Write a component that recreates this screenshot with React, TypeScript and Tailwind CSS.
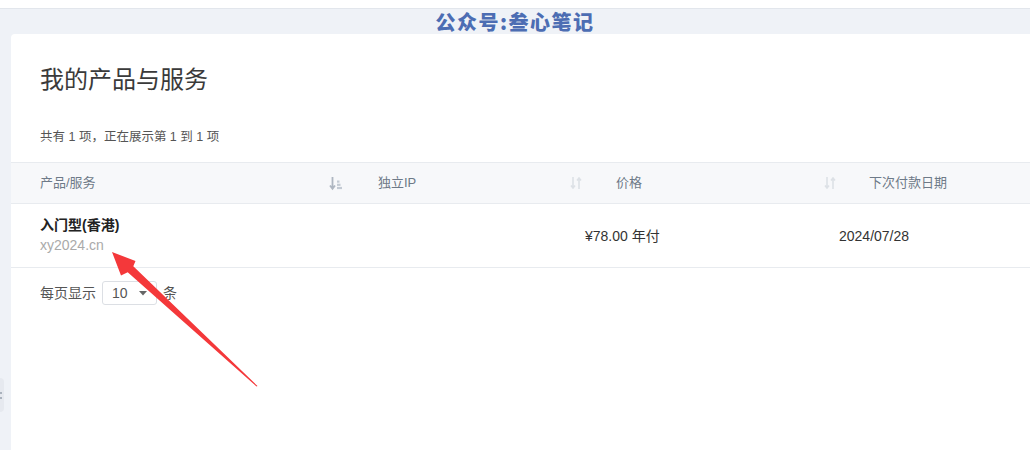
const FONT = { fontFamily: '"Liberation Sans", "Noto Sans CJK SC", sans-serif' };

function SortDown() {
  return (
    <svg width="14" height="15" viewBox="0 0 14 15" className="shrink-0">
      <path d="M3.5 1v11.5M1 9.5L3.5 12.8L6 9.5" stroke="#aeb6c1" strokeWidth="1.8" fill="none" />
      <rect x="8" y="4.5" width="2.5" height="2.2" fill="#c3cad3" />
      <rect x="8" y="7.7" width="3.5" height="2.2" fill="#c3cad3" />
      <rect x="8" y="10.9" width="5" height="2.2" fill="#c3cad3" />
    </svg>
  );
}

function SortBoth() {
  return (
    <svg width="12" height="14" viewBox="0 0 12 14" className="shrink-0">
      <path d="M3 1v11M1 9.5L3 12L5 9.5" stroke="#dde1e6" strokeWidth="1.6" fill="none" />
      <path d="M9 13V2M7 4.5L9 2L11 4.5" stroke="#dde1e6" strokeWidth="1.6" fill="none" />
    </svg>
  );
}

function Arrow() {
  return (
    <svg className="pointer-events-none absolute left-0 top-0" width="300" height="400">
      <polygon
        points="112,252 135.5,261 133.3,266.3 257.5,386 256.5,386.5 127.7,272.2 121,275.5"
        fill="#f4383a"
      />
    </svg>
  );
}

export default function App() {
  return (
    <div className="relative h-[450px] w-[1030px] overflow-hidden bg-[#eff2f7]" style={FONT}>
      <div className="h-[9px] border-b border-[#e2e6ec] bg-white" />
      <div className="flex h-[25px] items-center justify-center">
        <span
          className="text-[20px] font-black leading-none tracking-[1.5px] text-[#4c6db3]"
          style={{ fontFamily: '"Noto Sans CJK SC", sans-serif' }}
        >
          公众号:叁心笔记
        </span>
      </div>
      <div className="flex">
        <div className="w-[11px] shrink-0 pt-[344px]">
          <div className="flex h-[34px] w-[4px] flex-col items-start justify-center gap-[3px] rounded-r-sm bg-[#e6e9ef]">
            <div className="h-[2px] w-[2px] bg-[#aab2bd]" />
            <div className="h-[2px] w-[2px] bg-[#aab2bd]" />
          </div>
        </div>
        <div className="h-[420px] flex-1 rounded-tl-[4px] bg-white pt-[30px]">
          <h1 className="pl-[29px] text-[24px] font-normal leading-[32px] text-[#3a3a3a]">我的产品与服务</h1>
          <p className="mt-[33px] pl-[29px] text-[12.5px] leading-[16px] text-[#555]">
            共有 1 项，正在展示第 1 到 1 项
          </p>

          <div className="mt-[17px] flex h-[41px] items-center border-t border-[#e8ebef] bg-[#f7f8fa] text-[13px] text-[#6e7a88]">
            <div className="flex w-[339px] items-center justify-between pl-[29px] pr-[7px]">
              <span>产品/服务</span>
              <SortDown />
            </div>
            <div className="flex w-[240px] items-center justify-between pl-[28px] pr-[8px]">
              <span>独立IP</span>
              <SortBoth />
            </div>
            <div className="flex w-[255px] items-center justify-between pl-[26px] pr-[9px]">
              <span>价格</span>
              <SortBoth />
            </div>
            <div className="pl-[24px]">
              <span>下次付款日期</span>
            </div>
          </div>

          <div className="flex h-[65px] items-center border-y border-[#e8ebef] text-[14px] text-[#333]">
            <div className="w-[339px] pl-[29px]">
              <div className="text-[14px] font-bold leading-[19px] text-[#222]">入门型(香港)</div>
              <div className="leading-[20px] text-[#aaa]">xy2024.cn</div>
            </div>
            <div className="w-[210px]" />
            <div className="w-[255px] pl-[25px] pt-[2px]">¥78.00 年付</div>
            <div className="pl-[24px] pt-[2px]">2024/07/28</div>
          </div>

          <div className="mt-[13px] flex items-center pl-[29px] text-[14px] text-[#555]">
            <span>每页显示</span>
            <div className="ml-[6px] flex h-[24px] w-[55px] items-center rounded-[3px] border border-[#dcdfe4] pl-[9px]">
              <span className="text-[#555]">10</span>
              <svg width="8" height="5" viewBox="0 0 8 5" className="ml-[11px]">
                <path d="M0 0h8L4 4.5z" fill="#666" />
              </svg>
            </div>
            <span className="ml-[6px]">条</span>
          </div>
        </div>
      </div>
      <Arrow />
    </div>
  );
}
